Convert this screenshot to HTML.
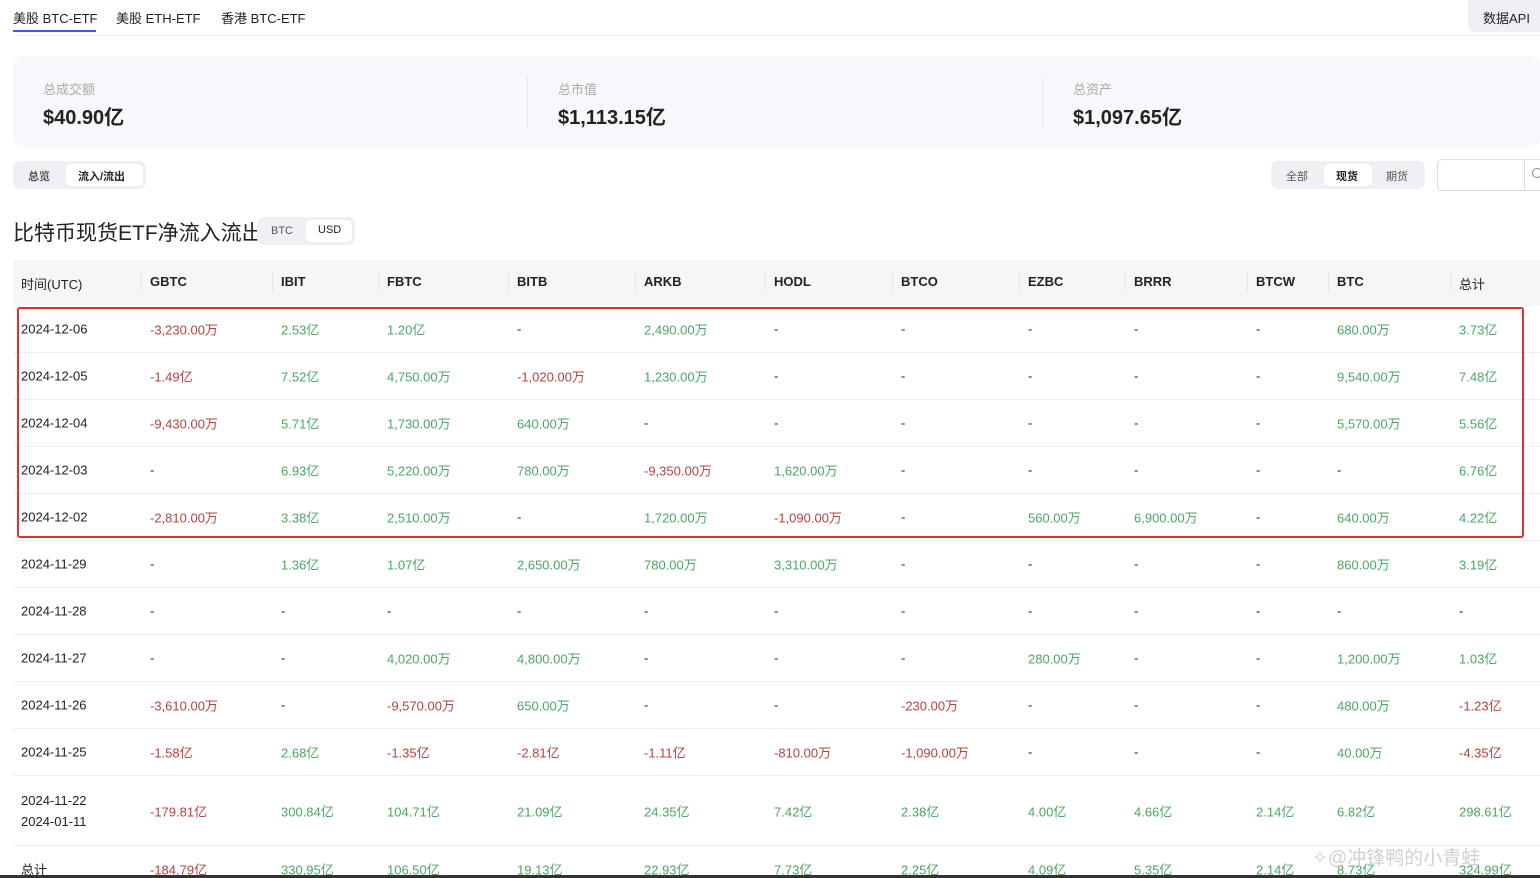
<!DOCTYPE html>
<html><head><meta charset="utf-8"><style>
*{margin:0;padding:0;box-sizing:border-box}
html,body{width:1540px;height:878px;overflow:hidden}
body{background:#fff;font-family:"Liberation Sans","Noto Sans CJK SC",sans-serif;color:#222;position:relative;font-size:13px}
.a{position:absolute;white-space:nowrap}
.r{color:#b8413f}.g{color:#4aa764}
.row{position:absolute;left:13px;width:1527px;height:47px;border-bottom:1px solid #eceef1}
.row span{position:absolute;top:50%;transform:translateY(-50%);white-space:nowrap;font-size:13px}
</style></head><body>
<div class="a" style="left:13px;top:8px;font-size:13px">美股 BTC-ETF</div>
<div class="a" style="left:13px;top:30px;width:83px;height:2px;background:#3b5bdb"></div>
<div class="a" style="left:116px;top:8px;font-size:13px">美股 ETH-ETF</div>
<div class="a" style="left:221px;top:8px;font-size:13px">香港 BTC-ETF</div>
<div class="a" style="left:13px;top:35px;width:1527px;height:1px;background:#eef0f3"></div>
<div class="a" style="left:1468px;top:0;width:72px;height:32px;background:#eef0f3;border-radius:0 0 0 8px;padding:8px 0 0 15px;font-size:13px">数据API</div>

<div class="a" style="left:13px;top:56px;width:1527px;height:91px;background:#f7f8fb;border-radius:10px"></div>
<div class="a" style="left:43px;top:79px;color:#aaa;font-size:13px">总成交额</div>
<div class="a" style="left:43px;top:101px;font-size:20px;font-weight:bold">$40.90亿</div>
<div class="a" style="left:527px;top:76px;width:1px;height:52px;background:#e6e8ec"></div>
<div class="a" style="left:558px;top:79px;color:#aaa;font-size:13px">总市值</div>
<div class="a" style="left:558px;top:101px;font-size:20px;font-weight:bold">$1,113.15亿</div>
<div class="a" style="left:1042px;top:76px;width:1px;height:52px;background:#e6e8ec"></div>
<div class="a" style="left:1073px;top:79px;color:#aaa;font-size:13px">总资产</div>
<div class="a" style="left:1073px;top:101px;font-size:20px;font-weight:bold">$1,097.65亿</div>

<div class="a" style="left:13px;top:161px;width:133px;height:28px;background:#eef0f3;border-radius:7px"></div>
<div class="a" style="left:28px;top:168px;font-size:11px;color:#555;font-weight:bold">总览</div>
<div class="a" style="left:66px;top:164px;width:77px;height:22px;background:#fff;border-radius:6px;padding:4px 0 0 12px;font-size:11px;font-weight:bold">流入/流出</div>

<div class="a" style="left:1271px;top:161px;width:154px;height:28px;background:#eef0f3;border-radius:7px"></div>
<div class="a" style="left:1286px;top:168px;font-size:11px;color:#555">全部</div>
<div class="a" style="left:1324px;top:164px;width:48px;height:22px;background:#fff;border-radius:6px;padding:4px 0 0 12px;font-size:11px;font-weight:bold">现货</div>
<div class="a" style="left:1386px;top:168px;font-size:11px;color:#555">期货</div>
<div class="a" style="left:1437px;top:159px;width:110px;height:32px;border:1px solid #ddd;border-radius:5px"></div>
<div class="a" style="left:1524px;top:160px;width:1px;height:30px;background:#ddd"></div>
<div class="a" style="left:1532px;top:168px;width:10px;height:10px;border:1.5px solid #888;border-radius:50%"></div>

<div class="a" style="left:13px;top:217px;font-size:21px">比特币现货ETF净流入流出</div>
<div class="a" style="left:257px;top:217px;width:98px;height:28px;background:#eef0f3;border-radius:7px"></div>
<div class="a" style="left:271px;top:225px;font-size:11px;color:#555">BTC</div>
<div class="a" style="left:306px;top:220px;width:46px;height:22px;background:#fff;border-radius:6px;padding:4px 0 0 12px;font-size:11px">USD</div>

<div class="a" style="left:13px;top:260px;width:1527px;height:45px;background:#f5f6f8"></div>
<div id="hdr"></div>
<div id="body"></div>
<div class="a" style="left:17px;top:307px;width:1507px;height:231px;border:2px solid #e03131;border-radius:3px"></div>
<div class="a" style="left:0;top:875px;width:1540px;height:3px;background:#333"></div>
<div class="a" style="left:1312px;top:843px;font-size:19px;color:rgba(200,200,200,.85)">✧@冲锋鸭的小青蛙</div>
<script>
const X=[21,150,281,387,517,644,774,901,1028,1134,1256,1337,1459];
const H=["时间(UTC)","GBTC","IBIT","FBTC","BITB","ARKB","HODL","BTCO","EZBC","BRRR","BTCW","BTC","总计"];
let h="";H.forEach((t,i)=>{h+=`<div class="a" style="left:${X[i]}px;top:274px;font-size:13px;${i&&i<12?'font-weight:bold;':''}">${t}</div>`;if(i)h+=`<div class="a" style="left:${X[i]-9}px;top:272px;width:1px;height:20px;background:#e3e5e8"></div>`;});
document.getElementById("hdr").innerHTML=h;
const R=[
["2024-12-06","-3,230.00万","2.53亿","1.20亿","-","2,490.00万","-","-","-","-","-","680.00万","3.73亿"],
["2024-12-05","-1.49亿","7.52亿","4,750.00万","-1,020.00万","1,230.00万","-","-","-","-","-","9,540.00万","7.48亿"],
["2024-12-04","-9,430.00万","5.71亿","1,730.00万","640.00万","-","-","-","-","-","-","5,570.00万","5.56亿"],
["2024-12-03","-","6.93亿","5,220.00万","780.00万","-9,350.00万","1,620.00万","-","-","-","-","-","6.76亿"],
["2024-12-02","-2,810.00万","3.38亿","2,510.00万","-","1,720.00万","-1,090.00万","-","560.00万","6,900.00万","-","640.00万","4.22亿"],
["2024-11-29","-","1.36亿","1.07亿","2,650.00万","780.00万","3,310.00万","-","-","-","-","860.00万","3.19亿"],
["2024-11-28","-","-","-","-","-","-","-","-","-","-","-","-"],
["2024-11-27","-","-","4,020.00万","4,800.00万","-","-","-","280.00万","-","-","1,200.00万","1.03亿"],
["2024-11-26","-3,610.00万","-","-9,570.00万","650.00万","-","-","-230.00万","-","-","-","480.00万","-1.23亿"],
["2024-11-25","-1.58亿","2.68亿","-1.35亿","-2.81亿","-1.11亿","-810.00万","-1,090.00万","-","-","-","40.00万","-4.35亿"],
["2024-11-22<br><span style='position:static;transform:none;display:block;margin-top:6px'>2024-01-11</span>","-179.81亿","300.84亿","104.71亿","21.09亿","24.35亿","7.42亿","2.38亿","4.00亿","4.66亿","2.14亿","6.82亿","298.61亿"],
["总计","-184.79亿","330.95亿","106.50亿","19.13亿","22.93亿","7.73亿","2.25亿","4.09亿","5.35亿","2.14亿","8.73亿","324.99亿"]];
let b="";let y=306;
R.forEach((r,ri)=>{const hh=ri==10?70:47;b+=`<div class="row" style="top:${y}px;height:${hh}px">`;
r.forEach((v,i)=>{let c="";if(i){c=v=="-"?"":(v[0]=="-"?"r":"g");}b+=`<span class="${c}" style="left:${X[i]-13}px">${v}</span>`});
b+="</div>";y+=hh;});
document.getElementById("body").innerHTML=b;
</script>
</body></html>
